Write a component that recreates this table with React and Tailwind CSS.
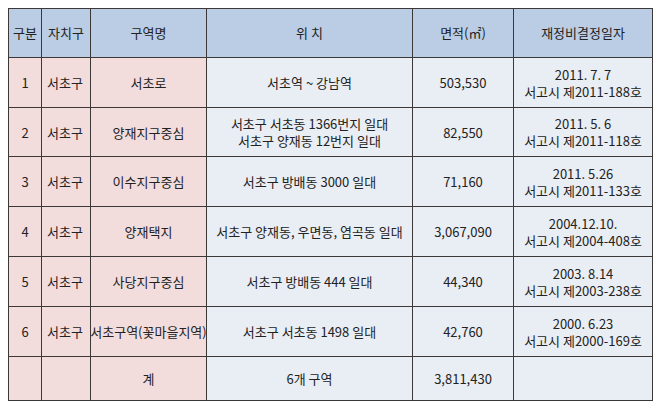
import React from "react";

const rows = [
  ["1", "서초구", "서초로", ["서초역 ~ 강남역"], "503,530", ["2011. 7. 7", "서고시 제2011-188호"]],
  ["2", "서초구", "양재지구중심", ["서초구 서초동 1366번지 일대", "서초구 양재동 12번지 일대"], "82,550", ["2011. 5. 6", "서고시 제2011-118호"]],
  ["3", "서초구", "이수지구중심", ["서초구 방배동 3000 일대"], "71,160", ["2011. 5.26", "서고시 제2011-133호"]],
  ["4", "서초구", "양재택지", ["서초구 양재동, 우면동, 염곡동 일대"], "3,067,090", ["2004.12.10.", "서고시 제2004-408호"]],
  ["5", "서초구", "사당지구중심", ["서초구 방배동 444 일대"], "44,340", ["2003. 8.14", "서고시 제2003-238호"]],
  ["6", "서초구", "서초구역(꽃마을지역)", ["서초구 서초동 1498 일대"], "42,760", ["2000. 6.23", "서고시 제2000-169호"]],
];

const heights = ["h-[49px]", "h-[48px]", "h-[49px]", "h-[49px]", "h-[49px]", "h-[49px]"];

function Cell({ children, pink, className = "" }) {
  return (
    <div
      className={`flex flex-col items-center justify-center text-center leading-[17px] ${
        pink ? "bg-[#f2dcdc]" : "bg-[#e9edf4]"
      } ${className}`}
    >
      {children}
    </div>
  );
}

export default function App() {
  return (
    <div
      className="w-[662px] h-[413px] bg-white pt-[8px] pl-[8px] text-[13px] text-[#222]"
      style={{ fontFamily: '"Noto Sans CJK KR", "Noto Sans", sans-serif' }}
    >
      <div className="grid grid-cols-[32px_48px_115px_205px_100px_138px] gap-px bg-[#3c3838] p-px w-[645px]">
        {["구분", "자치구", "구역명", "위 치", "면적(㎡)", "재정비결정일자"].map((h, i) => (
          <div key={i} className="h-[48px] bg-[#bacde4] flex items-center justify-center">
            {h}
          </div>
        ))}
        {rows.map((r, idx) => (
          <React.Fragment key={idx}>
            <Cell pink className={heights[idx]}>{r[0]}</Cell>
            <Cell pink className={`${heights[idx]} !items-start pl-[5px]`}>{r[1]}</Cell>
            <Cell pink className={`${heights[idx]} whitespace-nowrap`}>{r[2]}</Cell>
            <Cell className={`${heights[idx]} whitespace-nowrap`}>
              {r[3].map((t, j) => (
                <span key={j}>{t}</span>
              ))}
            </Cell>
            <Cell className={heights[idx]}>{r[4]}</Cell>
            <Cell className={`${heights[idx]} whitespace-nowrap`}>
              {r[5].map((t, j) => (
                <span key={j}>{t}</span>
              ))}
            </Cell>
          </React.Fragment>
        ))}
        <Cell pink className="h-[43px]"></Cell>
        <Cell pink className="h-[43px]"></Cell>
        <Cell pink className="h-[43px]">계</Cell>
        <Cell className="h-[43px]">6개 구역</Cell>
        <Cell className="h-[43px]">3,811,430</Cell>
        <Cell className="h-[43px]"></Cell>
      </div>
    </div>
  );
}
